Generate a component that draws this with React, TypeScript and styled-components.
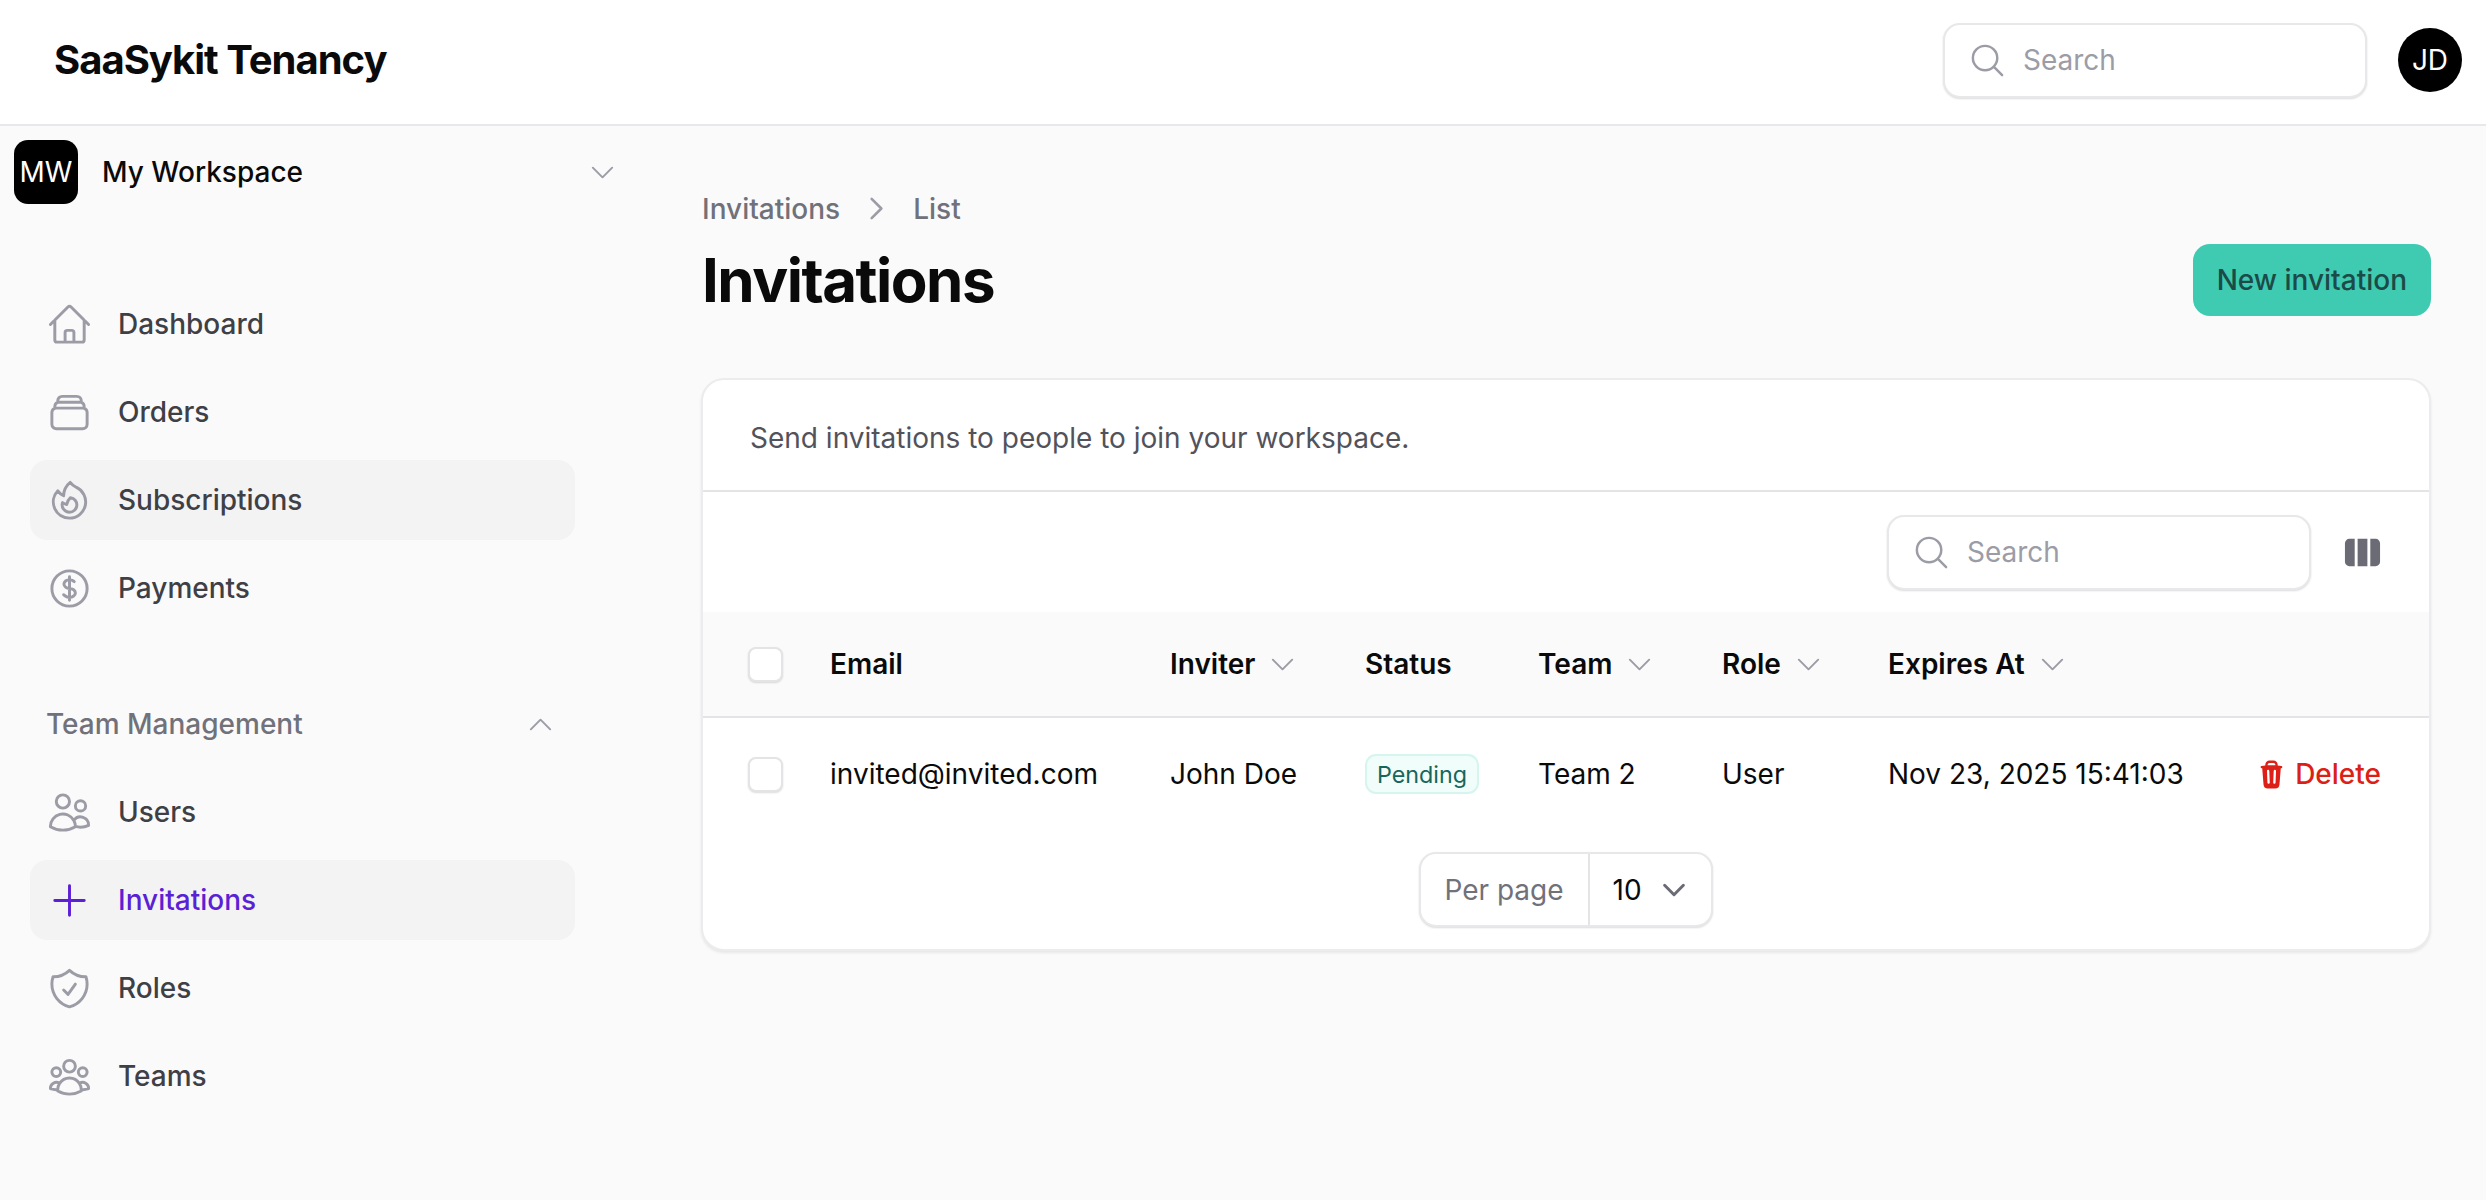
import React from "react"
import styled, { createGlobalStyle } from "styled-components"
import {
  HiOutlineHome,
  HiOutlineRectangleStack,
  HiOutlineFire,
  HiOutlineCurrencyDollar,
  HiOutlineUsers,
  HiOutlinePlus,
  HiOutlineShieldCheck,
  HiOutlineUserGroup,
  HiOutlineMagnifyingGlass,
  HiOutlineChevronDown,
  HiOutlineChevronUp,
  HiOutlineChevronRight,
  HiMiniViewColumns,
  HiMiniTrash,
} from "react-icons/hi2"

const GlobalStyle = createGlobalStyle`
  html, body {
    margin: 0;
    background: #fafafa;
    font-family: "Inter", "Liberation Sans", sans-serif;
    overflow: hidden;
  }
  * { box-sizing: border-box; }
`

const Page = styled.div`
  display: flex;
  flex-direction: column;
  height: 1200px;
`

const Topbar = styled.header`
  display: flex;
  align-items: center;
  justify-content: space-between;
  flex: none;
  height: 126px;
  padding: 0 24px 4px 54px;
  background: #fff;
  border-bottom: 2px solid #e8e8ea;
`

const Logo = styled.div`
  margin-bottom: 2px;
  font-size: 40px;
  font-weight: 700;
  letter-spacing: -0.025em;
  color: #0a0a0a;
`

const TopbarRight = styled.div`
  display: flex;
  align-items: center;
  gap: 31px;
`

const SearchBox = styled.label`
  display: flex;
  align-items: center;
  gap: 16px;
  width: 424px;
  height: 75px;
  padding-left: 23px;
  background: #fff;
  border: 2px solid #e8e8ea;
  border-radius: 17px;
  box-shadow: 0 1px 2px rgba(0, 0, 0, 0.14);
  color: #9c9ca6;
  font-size: 39px;
  svg { flex: none; }
`

const SearchInput = styled.input`
  flex: 1;
  min-width: 0;
  border: 0;
  outline: 0;
  padding: 0;
  background: transparent;
  font: 400 28px "Inter", sans-serif;
  &::placeholder { color: #9c9ca6; opacity: 1; }
`

const Avatar = styled.div`
  display: flex;
  align-items: center;
  justify-content: center;
  width: 64px;
  height: 64px;
  background: #000;
  color: #fff;
  font-size: 28px;
  font-weight: 400;
`

const UserAvatar = styled(Avatar)`
  border-radius: 50%;
`

const WorkspaceAvatar = styled(Avatar)`
  border-radius: 14px;
  flex: none;
`

const Body = styled.div`
  display: flex;
  flex: 1;
  min-height: 0;
`

const Sidebar = styled.aside`
  flex: none;
  width: 640px;
  padding: 14px 0 0 14px;
`

const WorkspaceSwitcher = styled.div`
  display: flex;
  align-items: center;
  gap: 24px;
  width: 604px;
  height: 64px;
  font-size: 28px;
  font-weight: 500;
  color: #0a0a0a;
  svg { margin-left: auto; font-size: 31px; color: #9c9ca6; }
`

const NavList = styled.nav`
  display: flex;
  flex-direction: column;
  gap: 8px;
  width: 545px;
  margin-left: 16px;
`

const MainNav = styled(NavList)`
  margin-top: 80px;
`

const GroupLabel = styled.div`
  display: flex;
  align-items: center;
  justify-content: space-between;
  width: 545px;
  height: 54px;
  margin: 69px 0 21px 16px;
  padding: 0 19px 0 16px;
  font-size: 28px;
  font-weight: 500;
  color: #71717a;
  svg { font-size: 31px; color: #9c9ca6; }
`

const NavItem = styled.a<{ $active?: boolean; $current?: boolean }>`
  display: flex;
  align-items: center;
  gap: 25px;
  height: 80px;
  padding-left: 16px;
  border-radius: 17px;
  background: ${(p) => (p.$active || p.$current ? "#f3f3f4" : "transparent")};
  color: ${(p) => (p.$current ? "#5b1fd6" : "#3f3f46")};
  font-size: 28px;
  font-weight: 500;
  svg {
    flex: none;
    font-size: 47px;
    color: ${(p) => (p.$current ? "#5b1fd6" : "#9c9ca6")};
  }
`

const Main = styled.main`
  flex: 1;
  min-width: 0;
  padding: 63px 55px 0 61px;
`

const Breadcrumbs = styled.div`
  display: flex;
  align-items: center;
  gap: 23px;
  height: 39px;
  padding-left: 1px;
  font-size: 28px;
  font-weight: 500;
  color: #71717a;
  svg { font-size: 31px; color: #9c9ca6; stroke-width: 2; margin: 0 -2px; }
`

const TitleRow = styled.div`
  display: flex;
  align-items: center;
  justify-content: space-between;
  margin-top: 16px;
  height: 72px;
  padding-left: 1px;
`

const Title = styled.h1`
  margin: 0;
  font-size: 60px;
  font-weight: 700;
  letter-spacing: -0.025em;
  color: #0a0a0a;
`

const PrimaryButton = styled.button`
  height: 72px;
  padding: 0 24px;
  border: 0;
  border-radius: 17px;
  background: #3ecbb2;
  color: #1c4a47;
  font: 500 28px "Inter", sans-serif;
`

const Card = styled.section`
  margin-top: 62px;
  background: #fff;
  border: 2px solid #ececee;
  border-radius: 23px;
  box-shadow: 0 2px 3px rgba(0, 0, 0, 0.08);
  overflow: hidden;
`

const CardIntro = styled.div`
  display: flex;
  align-items: center;
  height: 112px;
  padding: 5px 0 0 47px;
  border-bottom: 2px solid #e4e4e7;
  font-size: 28px;
  color: #52525b;
`

const Toolbar = styled.div`
  display: flex;
  align-items: center;
  justify-content: flex-end;
  gap: 32px;
  height: 120px;
  padding-right: 47px;
`

const ColumnsToggle = styled.span`
  display: flex;
  font-size: 39px;
  color: #6b6b76;
`

const columns = "82px 340px 195px 173px 184px 166px 1fr"

const HeadRow = styled.div`
  display: grid;
  grid-template-columns: ${columns};
  align-items: center;
  height: 106px;
  padding-left: 45px;
  background: #fafafa;
  border-bottom: 2px solid #e4e4e7;
  font-size: 28px;
  font-weight: 600;
  color: #0a0a0a;
`

const BodyRow = styled.div`
  display: grid;
  grid-template-columns: ${columns};
  align-items: center;
  height: 112px;
  padding: 0 48px 0 45px;
  font-size: 28px;
  color: #0a0a0a;
`

const Check = styled.input.attrs({ type: "checkbox" })`
  appearance: none;
  display: block;
  width: 35px;
  height: 35px;
  margin: 0;
  background: #fff;
  border: 2px solid #e4e4e7;
  border-radius: 8px;
  box-shadow: 0 1px 2px rgba(0, 0, 0, 0.14);
`

const SortHead = styled.span`
  display: flex;
  align-items: center;
  gap: 12px;
  svg { font-size: 31px; color: #9c9ca6; }
`

const Badge = styled.span`
  display: inline-flex;
  align-items: center;
  height: 40px;
  padding: 0 10px;
  background: #f0fdfa;
  border: 2px solid #d5f5ee;
  border-radius: 11px;
  font-size: 23.3px;
  font-weight: 400;
  color: #17665c;
`

const ExpiryCell = styled.div`
  display: flex;
  align-items: center;
  justify-content: space-between;
`

const DeleteAction = styled.a`
  display: flex;
  align-items: center;
  gap: 8px;
  color: #dc1f17;
  font-weight: 500;
  svg { font-size: 31px; }
`

const PagerRow = styled.div`
  display: flex;
  justify-content: center;
  padding: 22px 0 22px;
`

const Pager = styled.div`
  display: flex;
  align-items: center;
  height: 75px;
  background: #fff;
  border: 2px solid #e8e8ea;
  border-radius: 17px;
  box-shadow: 0 1px 2px rgba(0, 0, 0, 0.14);
  font-size: 28px;
`

const PagerLabel = styled.span`
  display: flex;
  align-items: center;
  height: 100%;
  padding: 0 24px 0 23px;
  border-right: 2px solid #e4e4e7;
  color: #71717a;
`

const PagerSelect = styled.span`
  display: flex;
  align-items: center;
  gap: 17px;
  padding: 0 22px 0 23px;
  color: #0a0a0a;
  svg { font-size: 30px; color: #6b6b76; stroke-width: 2.4; }
`

const mainNav = [
  { label: "Dashboard", icon: HiOutlineHome },
  { label: "Orders", icon: HiOutlineRectangleStack },
  { label: "Subscriptions", icon: HiOutlineFire, active: true },
  { label: "Payments", icon: HiOutlineCurrencyDollar },
]

const teamNav = [
  { label: "Users", icon: HiOutlineUsers },
  { label: "Invitations", icon: HiOutlinePlus, current: true },
  { label: "Roles", icon: HiOutlineShieldCheck },
  { label: "Teams", icon: HiOutlineUserGroup },
]

type NavEntry = { label: string; icon: React.ComponentType; active?: boolean; current?: boolean }

function NavEntries({ items }: { items: NavEntry[] }) {
  return (
    <>
      {items.map((item) => (
        <NavItem key={item.label} $active={item.active} $current={item.current}>
          <item.icon />
          {item.label}
        </NavItem>
      ))}
    </>
  )
}

function Search() {
  return (
    <SearchBox>
      <HiOutlineMagnifyingGlass />
      <SearchInput placeholder="Search" />
    </SearchBox>
  )
}

export default function App() {
  return (
    <Page>
      <GlobalStyle />
      <Topbar>
        <Logo>SaaSykit Tenancy</Logo>
        <TopbarRight>
          <Search />
          <UserAvatar>JD</UserAvatar>
        </TopbarRight>
      </Topbar>
      <Body>
        <Sidebar>
          <WorkspaceSwitcher>
            <WorkspaceAvatar>MW</WorkspaceAvatar>
            My Workspace
            <HiOutlineChevronDown />
          </WorkspaceSwitcher>
          <MainNav>
            <NavEntries items={mainNav} />
          </MainNav>
          <GroupLabel>
            Team Management
            <HiOutlineChevronUp />
          </GroupLabel>
          <NavList>
            <NavEntries items={teamNav} />
          </NavList>
        </Sidebar>
        <Main>
          <Breadcrumbs>
            <span>Invitations</span>
            <HiOutlineChevronRight />
            <span>List</span>
          </Breadcrumbs>
          <TitleRow>
            <Title>Invitations</Title>
            <PrimaryButton>New invitation</PrimaryButton>
          </TitleRow>
          <Card>
            <CardIntro>Send invitations to people to join your workspace.</CardIntro>
            <Toolbar>
              <Search />
              <ColumnsToggle>
                <HiMiniViewColumns />
              </ColumnsToggle>
            </Toolbar>
            <HeadRow>
              <Check />
              <span>Email</span>
              <SortHead>Inviter <HiOutlineChevronDown /></SortHead>
              <span>Status</span>
              <SortHead>Team <HiOutlineChevronDown /></SortHead>
              <SortHead>Role <HiOutlineChevronDown /></SortHead>
              <SortHead>Expires At <HiOutlineChevronDown /></SortHead>
            </HeadRow>
            <BodyRow>
              <Check />
              <span>invited@invited.com</span>
              <span>John Doe</span>
              <span><Badge>Pending</Badge></span>
              <span>Team 2</span>
              <span>User</span>
              <ExpiryCell>
                <span>Nov 23, 2025 15:41:03</span>
                <DeleteAction>
                  <HiMiniTrash />
                  Delete
                </DeleteAction>
              </ExpiryCell>
            </BodyRow>
            <PagerRow>
              <Pager>
                <PagerLabel>Per page</PagerLabel>
                <PagerSelect>
                  10
                  <HiOutlineChevronDown />
                </PagerSelect>
              </Pager>
            </PagerRow>
          </Card>
        </Main>
      </Body>
    </Page>
  )
}
